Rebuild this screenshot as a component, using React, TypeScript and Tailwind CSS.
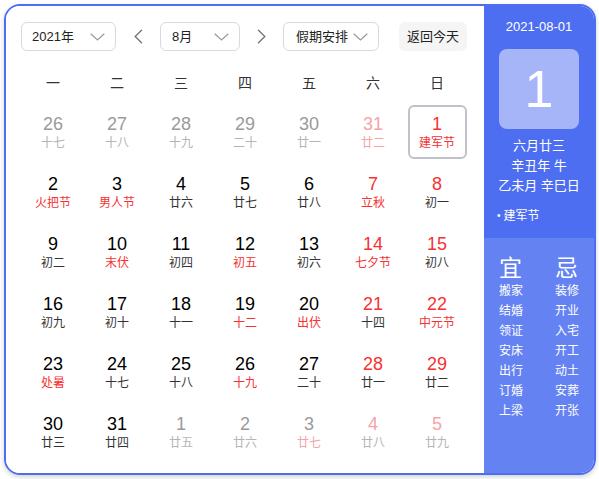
import React from "react";

type Cell = { d: number; l: string; nc: string; lc: string; sel?: boolean };

const N = "text-black";
const G = "text-[#9a9a9a]";
const GL = "text-[#b5b5b5]";
const L = "text-[#333333]";
const R = "text-[#f73131]";
const FR = "text-[#f5a3a8]";

const rows: Cell[][] = [
  [
    { d: 26, l: "十七", nc: G, lc: GL },
    { d: 27, l: "十八", nc: G, lc: GL },
    { d: 28, l: "十九", nc: G, lc: GL },
    { d: 29, l: "二十", nc: G, lc: GL },
    { d: 30, l: "廿一", nc: G, lc: GL },
    { d: 31, l: "廿二", nc: FR, lc: FR },
    { d: 1, l: "建军节", nc: R, lc: R, sel: true },
  ],
  [
    { d: 2, l: "火把节", nc: N, lc: R },
    { d: 3, l: "男人节", nc: N, lc: R },
    { d: 4, l: "廿六", nc: N, lc: L },
    { d: 5, l: "廿七", nc: N, lc: L },
    { d: 6, l: "廿八", nc: N, lc: L },
    { d: 7, l: "立秋", nc: R, lc: R },
    { d: 8, l: "初一", nc: R, lc: L },
  ],
  [
    { d: 9, l: "初二", nc: N, lc: L },
    { d: 10, l: "末伏", nc: N, lc: R },
    { d: 11, l: "初四", nc: N, lc: L },
    { d: 12, l: "初五", nc: N, lc: R },
    { d: 13, l: "初六", nc: N, lc: L },
    { d: 14, l: "七夕节", nc: R, lc: R },
    { d: 15, l: "初八", nc: R, lc: L },
  ],
  [
    { d: 16, l: "初九", nc: N, lc: L },
    { d: 17, l: "初十", nc: N, lc: L },
    { d: 18, l: "十一", nc: N, lc: L },
    { d: 19, l: "十二", nc: N, lc: R },
    { d: 20, l: "出伏", nc: N, lc: R },
    { d: 21, l: "十四", nc: R, lc: L },
    { d: 22, l: "中元节", nc: R, lc: R },
  ],
  [
    { d: 23, l: "处暑", nc: N, lc: R },
    { d: 24, l: "十七", nc: N, lc: L },
    { d: 25, l: "十八", nc: N, lc: L },
    { d: 26, l: "十九", nc: N, lc: R },
    { d: 27, l: "二十", nc: N, lc: L },
    { d: 28, l: "廿一", nc: R, lc: L },
    { d: 29, l: "廿二", nc: R, lc: L },
  ],
  [
    { d: 30, l: "廿三", nc: N, lc: L },
    { d: 31, l: "廿四", nc: N, lc: L },
    { d: 1, l: "廿五", nc: G, lc: GL },
    { d: 2, l: "廿六", nc: G, lc: GL },
    { d: 3, l: "廿七", nc: G, lc: FR },
    { d: 4, l: "廿八", nc: FR, lc: GL },
    { d: 5, l: "廿九", nc: FR, lc: GL },
  ],
];

const weekdays = ["一", "二", "三", "四", "五", "六", "日"];
const yi = ["搬家", "结婚", "领证", "安床", "出行", "订婚", "上梁"];
const ji = ["装修", "开业", "入宅", "开工", "动土", "安葬", "开张"];

function ChevronDown() {
  return (
    <svg width="15" height="8" viewBox="0 0 15 8" fill="none">
      <path d="M0.7 0.7 L7.5 7 L14.3 0.7" stroke="#9a9a9a" strokeWidth="1.2" />
    </svg>
  );
}

function Arrow({ dir }: { dir: "l" | "r" }) {
  return (
    <svg width="9" height="15" viewBox="0 0 9 15" fill="none">
      {dir === "l" ? (
        <path d="M8 0.8 L1.2 7.5 L8 14.2" stroke="#777" strokeWidth="1.4" />
      ) : (
        <path d="M1 0.8 L7.8 7.5 L1 14.2" stroke="#777" strokeWidth="1.4" />
      )}
    </svg>
  );
}

export default function App() {
  return (
    <div
      className="w-[599px] h-[479px] bg-white p-[4px]"
      style={{ fontFamily: '"Liberation Sans", "Noto Sans CJK SC", sans-serif' }}
    >
      <div className="w-[592px] h-[471px] border-2 border-[#4e6ef2] rounded-[16px] overflow-hidden flex shadow-[0_2px_5px_rgba(0,0,0,0.18)]">
        {/* Left calendar */}
        <div className="w-[478px] bg-white pt-[16px] px-[15px]">
          {/* top bar */}
          <div className="flex items-center h-[29px]">
            <div className="w-[95px] h-[29px] border border-[#d9d9de] rounded-[6px] flex items-center justify-between pl-[10px] pr-[10px] text-[13px] text-[#222]">
              <span>2021年</span>
              <ChevronDown />
            </div>
            <div className="w-[44px] flex justify-center">
              <Arrow dir="l" />
            </div>
            <div className="w-[80px] h-[29px] border border-[#d9d9de] rounded-[6px] flex items-center justify-between pl-[11px] pr-[10px] text-[13px] text-[#222]">
              <span>8月</span>
              <ChevronDown />
            </div>
            <div className="w-[43px] flex justify-center">
              <Arrow dir="r" />
            </div>
            <div className="w-[96px] h-[29px] border border-[#d9d9de] rounded-[6px] flex items-center justify-between pl-[12px] pr-[10px] text-[13px] text-[#222]">
              <span>假期安排</span>
              <ChevronDown />
            </div>
            <div className="ml-[20px] w-[68px] h-[29px] bg-[#f5f5f6] rounded-[6px] flex items-center justify-center text-[13px] text-[#222]">
              返回今天
            </div>
          </div>
          {/* weekday header */}
          <div className="grid grid-cols-7 mt-[14px] h-[37px] items-center">
            {weekdays.map((w) => (
              <div key={w} className="text-center text-[14px] text-[#333]">
                {w}
              </div>
            ))}
          </div>
          {/* days */}
          <div className="grid grid-cols-7">
            {rows.flat().map((c, i) => (
              <div key={i} className="h-[60px] flex items-center justify-center">
                <div
                  className={
                    "w-[59px] h-[54px] rounded-[6px] flex flex-col items-center justify-center pt-[2px] " +
                    (c.sel ? "border-2 border-[#c0c2c9]" : "border-2 border-transparent")
                  }
                >
                  <div className={"text-[18px] leading-[20px] " + c.nc}>{c.d}</div>
                  <div className={"text-[12px] leading-[18px] " + c.lc}>{c.l}</div>
                </div>
              </div>
            ))}
          </div>
        </div>
        {/* Right panel */}
        <div className="flex-1 flex flex-col text-white">
          <div className="bg-[#4e6ef2] h-[232px] flex flex-col items-center pt-[11px]">
            <div className="text-[13px] leading-[20px]">2021-08-01</div>
            <div className="mt-[12px] w-[80px] h-[80px] rounded-[8px] bg-[#a5b5f8] flex items-center justify-center text-[52px] leading-none">
              1
            </div>
            <div className="mt-[7px] text-[13px] leading-[20px] text-center">
              <div>六月廿三</div>
              <div>辛丑年 牛</div>
              <div>乙未月 辛巳日</div>
            </div>
            <div className="self-start pl-[13px] mt-[12px] text-[12px] leading-[16px] flex items-center">
              <span className="text-[10px] mr-[3px]">•</span>建军节
            </div>
          </div>
          <div className="flex-1 bg-[#6482f2] flex pl-[15px] pt-[17px]">
            <div className="w-[56px] flex flex-col">
              <div className="text-[23px] leading-[26px]">宜</div>
              {yi.map((t) => (
                <div key={t} className="text-[12px] leading-[20px]">
                  {t}
                </div>
              ))}
            </div>
            <div className="flex flex-col">
              <div className="text-[23px] leading-[26px]">忌</div>
              {ji.map((t) => (
                <div key={t} className="text-[12px] leading-[20px]">
                  {t}
                </div>
              ))}
            </div>
          </div>
        </div>
      </div>
    </div>
  );
}
